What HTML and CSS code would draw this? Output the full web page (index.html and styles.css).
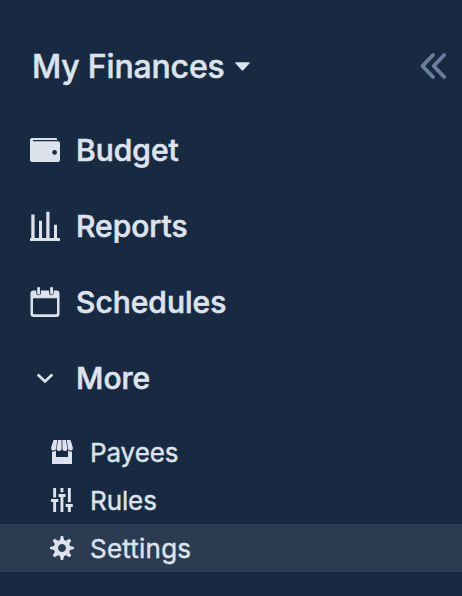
FILE: index.html
```html
<!DOCTYPE html>
<html lang="en">
<head>
<meta charset="utf-8">
<title>My Finances</title>
<link rel="stylesheet" href="styles.css">
</head>
<body>
<aside class="sidebar">
  <header class="header">
    <div class="budget-name">
      <span class="title">My Finances</span>
      <svg class="caret" width="15" height="9" viewBox="0 0 15 9"><path d="M1 .3h13q1 .3.4 1.2L8.5 8q-1 1-2 0L.6 1.5Q0 .6 1 .3z"/></svg>
    </div>
    <svg class="collapse" width="28" height="28" viewBox="0 0 28 28"><path d="M14 3 3.500 14 14 25M25.200 3 14.700 14l10.500 11"/></svg>
  </header>
  <nav>
    <a class="item">
      <svg class="icon" viewBox="0 0 30 30"><path fill-rule="evenodd" d="M2 3h24q1 0 1 1.100v.9H3v1.300h25q2 0 2 2V25q0 2-2 2H2q-2 0-2-2V5q0-2 2-2zm22.600 12a2.400 2.400 0 1 0 .01 0z"/></svg>
      <span>Budget</span>
    </a>
    <a class="item">
      <svg class="icon" viewBox="0 0 30 30"><path d="M1.300 3.600h3.300V28H1.300zM9 9.800h3V28H9zM16.300.8h3.200V28h-3.200zM24 13.800h3V28h-3z"/><rect y="27" width="30" height="3" rx=".6"/></svg>
      <span>Reports</span>
    </a>
    <a class="item">
      <svg class="icon" viewBox="0 0 30 30"><path fill-rule="evenodd" d="M3.500 3.600h2.800v2.600q0 2 2.300 2t2.300-2V3.600h8.200v2.600q0 2 2.300 2t2.300-2V3.600h2.800q3 0 3 3V27q0 3-3 3h-23q-3 0-3-3V6.600q0-3 3-3zM3 11.200v15q0 1 1 1h22q1 0 1-1v-15z"/><rect x="7.200" y="0" width="2.800" height="7.600" rx="1.200"/><rect x="20.200" y="0" width="2.800" height="7.600" rx="1.200"/></svg>
      <span>Schedules</span>
    </a>
    <a class="item">
      <svg class="icon chevron" viewBox="0 0 30 30"><path d="m7.700 11.600 7.300 6.900 7.300-6.900"/></svg>
      <span>More</span>
    </a>
    <div class="submenu">
      <a class="subitem">
        <svg class="small-icon" viewBox="0 0 24 24"><path d="M3.500 0h3.800l-1.200 8.200a2.500 2.500 0 0 1-5-.4zM8.100 0h3.500v8.400a2.500 2.500 0 0 1-5 0zM12.400 0h3.500l1.500 8.400a2.500 2.500 0 0 1-5 0zM16.700 0h3.800l2.400 7.800a2.500 2.500 0 0 1-5 .4z"/><path d="M2 11.600q2.500.4 4-1V17h12v-6.400q1.500 1.400 4 1V24H2z"/></svg>
        <span>Payees</span>
      </a>
      <a class="subitem">
        <svg class="small-icon" viewBox="0 0 24 24"><path d="M3.200 0h2.900v9.400H3.200zM1 11h7.300v3H6.100v10H3.200V14H1zM10.500 0h2.900v4.300h-2.900zM8.500 6h7v3h-2.100v15h-2.900V9h-2zM17.900 0h2.900v14.300h-2.900zM15.700 16h7.100v3h-2v5h-2.900v-5h-2.200z"/></svg>
        <span>Rules</span>
      </a>
      <a class="subitem active">
        <svg class="small-icon" viewBox="0 0 24 24"><path fill-rule="evenodd" d="M10.900 0h2.200l1 4 1.900.8 3.400-2.100 1.900 1.900L19.200 8l.8 1.900 4 1v2.200l-4 1-.8 1.900 2.100 3.400-1.900 1.900-3.400-2.100-1.900.8-1 4h-2.200l-1-4-1.900-.8-3.400 2.100-1.900-1.900L4.800 16 4 14.100l-4-1v-2.200l4-1L4.800 8 2.700 4.600l1.900-1.900L8 4.800 9.900 4zM12 8a4 4 0 1 0 .01 0z"/></svg>
        <span class="settings-label">Settings</span>
      </a>
    </div>
  </nav>
</aside>
</body>
</html>
```
FILE: styles.css
```css
* { box-sizing: border-box; }
body {
  margin: 0;
  background: #182a41;
  color: #dce3ed;
  font-family: Inter, sans-serif;
}
svg { display: block; flex: none; fill: currentColor; }
.sidebar { height: 596px; padding-top: 36px; }
.header {
  display: flex;
  align-items: center;
  justify-content: space-between;
  height: 60px;
  padding: 0 15px 0 32px;
}
.budget-name { display: flex; align-items: center; gap: 10px; }
.title {
  font-size: 32px;
  font-weight: 500;
  letter-spacing: -0.17px;
  -webkit-text-stroke: 0.5px currentColor;
}
.collapse { fill: none; stroke: #6a7f9c; stroke-width: 3.8; stroke-linecap: round; stroke-linejoin: round; }
nav { padding-top: 16px; }
.item {
  display: flex;
  align-items: center;
  gap: 16px;
  height: 76px;
  padding-left: 30px;
  font-size: 30px;
  font-weight: 500;
  -webkit-text-stroke: 0.6px currentColor;
}
.icon { width: 30px; height: 30px; }
.chevron { fill: none; stroke: currentColor; stroke-width: 2.7; }
.submenu { padding-top: 12px; }
.subitem {
  display: flex;
  align-items: center;
  gap: 16px;
  height: 48px;
  padding-left: 50px;
  font-size: 26px;
  font-weight: 400;
  letter-spacing: -0.1px;
  -webkit-text-stroke: 0.4px currentColor;
}
.small-icon { width: 24px; height: 24px; }
.active { background: #2b3b51; }
.settings-label { letter-spacing: 0.22px; }
```
